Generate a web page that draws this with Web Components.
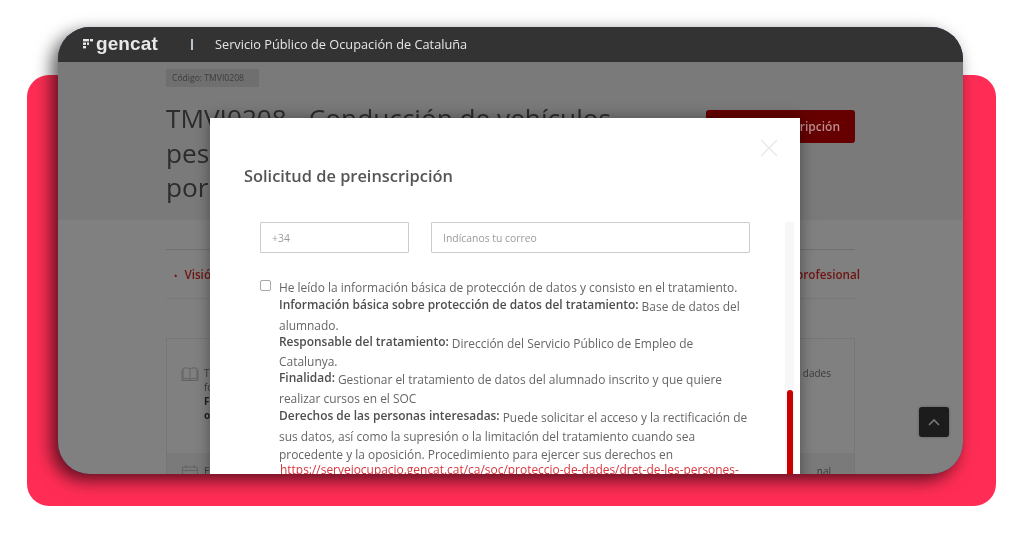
<!DOCTYPE html>
<html lang="es">
<head>
<meta charset="utf-8">
<title>Solicitud de preinscripción</title>
<style>
  html, body { margin: 0; background: #fff; }
  body { width: 1024px; height: 536px; overflow: hidden; font-family: "Open Sans", sans-serif; }
</style>
</head>
<body>
<showcase-stage>
  <gencat-bar title-text="Servicio Público de Ocupación de Cataluña"></gencat-bar>
  <course-page></course-page>
  <preinscription-modal></preinscription-modal>
  <scroll-top></scroll-top>
</showcase-stage>

<script>
(function () {
  class ShowcaseStage extends HTMLElement {
    constructor() {
      super();
      this.attachShadow({ mode: "open" });
      this.shadowRoot.innerHTML =
        "<style>" +
        ":host{display:grid;grid-template-rows:536px;grid-template-columns:1024px;width:1024px;height:536px;}" +
        ".pink,.window{grid-area:1/1;min-height:0;}" +
        ".pink{margin:75px 28px 30px 27px;background:#ff2d55;border-radius:22px;}" +
        ".window{margin:27px 61px 62px 58px;position:relative;background:#4b2d83;border-radius:32px;" +
        "box-shadow:-6px 6px 17px rgba(0,0,0,.65);}" +
        ".screen{position:relative;width:100%;height:100%;overflow:hidden;border-radius:32px;" +
        "display:flex;flex-direction:column;filter:blur(.6px);}" +
        "</style>" +
        "<div class='pink'></div>" +
        "<div class='window'><div class='screen'><slot></slot></div></div>";
    }
  }

  class GencatBar extends HTMLElement {
    constructor() {
      super();
      this.attachShadow({ mode: "open" });
    }

    connectedCallback() {
      this.shadowRoot.innerHTML =
        "<style>" +
        ":host{display:flex;align-items:center;flex:none;height:35px;background:#333;color:#e6e6e6;padding-left:25px;}" +
        "svg{width:10px;height:11px;flex:none;margin:-2px 3px 0 0;}" +
        ".brand{font:700 19px/1 'Liberation Sans',sans-serif;color:#e8e8e8;width:75px;letter-spacing:.1px;margin-top:-2px;}" +
        ".sep{width:2px;height:11px;background:#b9c4cc;margin:0 22px 0 20px;flex:none;}" +
        ".name{font:400 12.75px/1 'Open Sans',sans-serif;white-space:nowrap;}" +
        "</style>" +
        "<svg viewBox='0 0 10 11' fill='#e8e8e8'>" +
        "<rect x='0' y='1' width='6' height='2.4'/><rect x='7' y='1' width='3' height='2.4'/>" +
        "<rect x='0' y='4.5' width='3' height='2.4'/><rect x='4' y='4.5' width='2' height='2.4'/>" +
        "<rect x='0' y='8' width='3' height='2.4'/></svg>" +
        "<span class='brand'>gencat</span><span class='sep'></span>" +
        "<span class='name'>" + this.getAttribute("title-text") + "</span>";
    }
  }

  class CoursePage extends HTMLElement {
    constructor() {
      super();
      this.attachShadow({ mode: "open" });
      this.shadowRoot.innerHTML =
        "<style>" +
        ":host{display:flex;flex-direction:column;flex:1;min-height:0;background:#808080;color:#2e2e2e;font-family:'Open Sans',sans-serif;overflow:hidden;}" +
        ".hero{flex:none;height:158px;box-sizing:border-box;background:#7a7a7a;padding:7px 108px 0;}" +
        ".tag{display:inline-block;height:18px;line-height:18px;width:93px;box-sizing:border-box;padding-left:6px;background:#6f6f6f;font-size:8.6px;color:#3c3c3c;white-space:nowrap;vertical-align:top;}" +
        ".head{display:flex;justify-content:space-between;margin-top:10px;}" +
        "h1{margin:0;width:520px;font:400 26.2px/34.5px 'Open Sans',sans-serif;color:#2c2c2c;white-space:nowrap;}" +
        ".cta{width:149px;height:33px;box-sizing:border-box;margin-top:9px;padding-right:15px;background:#660000;border-radius:3px;color:#b98e8e;font-size:12px;font-weight:600;display:flex;align-items:center;justify-content:flex-end;white-space:nowrap;}" +
        ".tabs{flex:none;margin:29px 108px 0;height:50px;box-sizing:border-box;border-top:1px solid #707070;border-bottom:1px solid #787878;display:flex;align-items:center;justify-content:space-between;padding-left:8px;color:#701212;font-size:11.7px;font-weight:600;white-space:nowrap;}" +
        ".tabs em{font-style:normal;margin-right:7px;font-size:9px;}" +
        ".tabs span:last-child{margin-right:-5px;}" +
        ".panel{flex:none;margin:39px 108px 0;height:160px;box-sizing:border-box;border:1px solid #767676;border-bottom:0;display:flex;flex-direction:column;}" +
        ".row{display:flex;align-items:flex-start;justify-content:space-between;padding:27px 23px 0 14px;height:114px;box-sizing:border-box;flex:none;font-size:10px;color:#3a3a3a;}" +
        ".row + .row{background:#7a7a7a;padding-top:11px;}" +
        ".cell{display:flex;gap:5px;line-height:14px;}" +
        ".cell b{color:#1f1f1f;}" +
        "svg{width:18px;height:16px;flex:none;fill:none;stroke:#626262;stroke-width:1;}" +
        "</style>" +
        "<div class='hero'>" +
        "<span class='tag'>Código: TMVI0208</span>" +
        "<div class='head'><h1>TMVI0208 - Conducción de vehículos<br>pes<br>por</h1>" +
        "<div class='cta'>ripción</div></div>" +
        "</div>" +
        "<div class='tabs'><span><em>•</em>Visión general</span><span>Salidas a nivel profesional</span></div>" +
        "<div class='panel'>" +
        "<div class='row'><div class='cell'>" +
        "<svg viewBox='0 0 18 16'><path d='M9 3C7 1.6 4 1.6 2 2.4V13c2-.8 5-.8 7 .6 2-1.4 5-1.4 7-.6V2.4C14 1.6 11 1.6 9 3zM9 3v10.6M1 4v10.5h16V4'/></svg>" +
        "<div>T<br>fo<br><b>F</b><br><b>o</b></div></div><span>dades</span></div>" +
        "<div class='row'><div class='cell'>" +
        "<svg viewBox='0 0 18 16'><rect x='1.5' y='3' width='15' height='12' rx='1'/><path d='M1.5 6.5h15M5 1v3M13 1v3'/></svg>" +
        "<div>E</div></div><span>nal</span></div>" +
        "</div>";
    }
  }

  class PreinscriptionModal extends HTMLElement {
    constructor() {
      super();
      this.attachShadow({ mode: "open" });
      this.shadowRoot.innerHTML =
        "<style>" +
        ":host{display:block;position:absolute;left:152px;top:91px;width:590px;height:400px;background:#fff;box-shadow:0 0 14px rgba(0,0,0,.4);font-family:'Open Sans',sans-serif;color:#666;box-sizing:border-box;padding:46px 0 0 34px;}" +
        ".x{position:absolute;left:550px;top:21px;width:18px;height:18px;stroke:#e8e8e8;stroke-width:1.4;fill:none;}" +
        "h2{margin:0;font:600 16.4px/24px 'Open Sans',sans-serif;color:#555;white-space:nowrap;}" +
        ".fields{display:flex;gap:22px;margin:34px 0 0 16px;}" +
        ".input{height:31px;box-sizing:border-box;border:1px solid #ccc;border-radius:1px;display:flex;align-items:center;padding-left:11px;font-size:10.4px;color:#9a9a9a;}" +
        ".phone{width:149px;}" +
        ".mail{width:319px;}" +
        ".legal{display:flex;margin:26px 0 0 16px;}" +
        ".check{width:10.5px;height:10.5px;box-sizing:border-box;border:1px solid #a8a8a8;border-radius:2px;margin:1px 8.5px 0 0;flex:none;}" +
        ".text{font-size:11.95px;white-space:nowrap;color:#666;}" +
        ".text div{display:flex;align-items:flex-end;gap:3px;}" +
        ".text b{font-weight:600;color:#4e4e4e;}" +
        ".text i{font-style:normal;position:relative;top:2px;}" +
        ".text a{color:#d8343c;text-decoration:none;margin-left:1px;}" +
        ".bar{position:absolute;left:575px;top:104px;width:9px;height:296px;background:#f7f7f7;display:flex;flex-direction:column;justify-content:flex-end;align-items:center;}" +
        ".thumb{width:6px;height:128px;background:#c80000;border-radius:3px 3px 0 0;}" +
        "</style>" +
        "<svg class='x' viewBox='0 0 18 18'><path d='M1 1l16 16M17 1L1 17'/></svg>" +
        "<h2>Solicitud de preinscripción</h2>" +
        "<div class='fields'><div class='input phone'>+34</div><div class='input mail'>Indícanos tu correo</div></div>" +
        "<div class='legal'><span class='check'></span><div class='text'>" +
        "<div style='height:17px'>He leído la información básica de protección de datos y consisto en el tratamiento.</div>" +
        "<div style='height:17px'><b>Información básica sobre protección de datos del tratamiento:</b><i>Base de datos del</i></div>" +
        "<div style='height:21px'>alumnado.</div>" +
        "<div style='height:16px'><b>Responsable del tratamiento:</b><i>Dirección del Servicio Público de Empleo de</i></div>" +
        "<div style='height:20px'>Catalunya.</div>" +
        "<div style='height:16px'><b>Finalidad:</b><i>Gestionar el tratamiento de datos del alumnado inscrito y que quiere</i></div>" +
        "<div style='height:21px'>realizar cursos en el SOC</div>" +
        "<div style='height:17px'><b>Derechos de las personas interesadas:</b><i>Puede solicitar el acceso y la rectificación de</i></div>" +
        "<div style='height:21px'>sus datos, así como la supresión o la limitación del tratamiento cuando sea</div>" +
        "<div style='height:18px'>procedente y la oposición. Procedimiento para ejercer sus derechos en</div>" +
        "<div style='height:15px'><a>https://serveiocupacio.gencat.cat/ca/soc/proteccio-de-dades/dret-de-les-persones-</a></div>" +
        "</div></div>" +
        "<div class='bar'><div class='thumb'></div></div>";
    }
  }

  class ScrollTop extends HTMLElement {
    constructor() {
      super();
      this.attachShadow({ mode: "open" });
      this.shadowRoot.innerHTML =
        "<style>" +
        ":host{display:flex;align-items:center;justify-content:center;position:absolute;left:861px;top:380px;width:30px;height:30px;background:#1c1c1c;border-radius:3px;box-shadow:0 0 3px rgba(0,0,0,.3);}" +
        "svg{width:12px;height:8px;fill:none;stroke:#777;stroke-width:1.6;}" +
        "</style>" +
        "<svg viewBox='0 0 12 8'><path d='M1 7l5-5 5 5'/></svg>";
    }
  }

  customElements.define("showcase-stage", ShowcaseStage);
  customElements.define("gencat-bar", GencatBar);
  customElements.define("course-page", CoursePage);
  customElements.define("preinscription-modal", PreinscriptionModal);
  customElements.define("scroll-top", ScrollTop);
})();
</script>
</body>
</html>
